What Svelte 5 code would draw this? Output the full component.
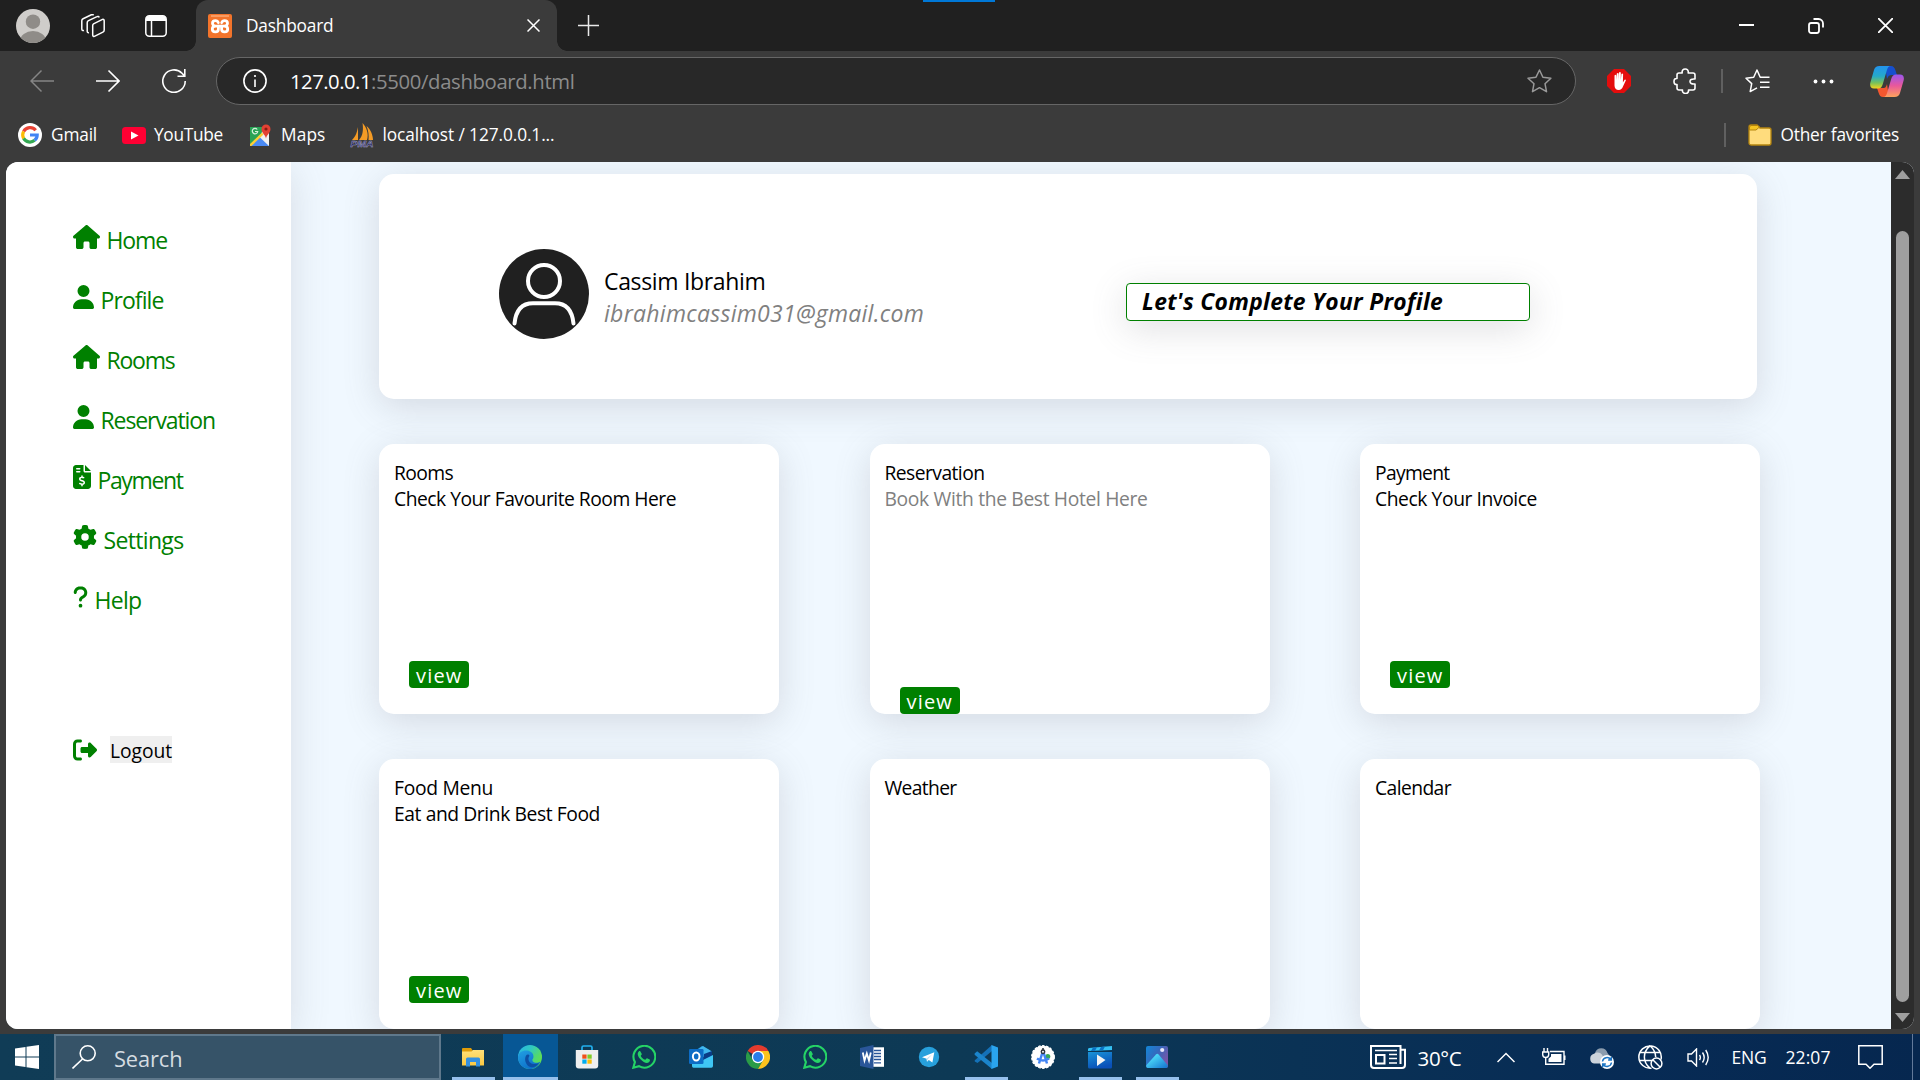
<script>
  const nav = [
    { icon: 'house', label: 'Home', w: 60.5 },
    { icon: 'user', label: 'Profile', w: 63 },
    { icon: 'house', label: 'Rooms', w: 68 },
    { icon: 'user', label: 'Reservation', w: 114.5 },
    { icon: 'invoice', label: 'Payment', w: 85 },
    { icon: 'gear', label: 'Settings', w: 80 },
    { icon: 'question', label: 'Help', w: 47 },
  ];

  const faIcons = {
    house: { w: 576, d: 'M575.8 255.5c0 18-15 32.1-32 32.1h-32l.7 160.2c0 2.700-.2 5.400-.5 8.100V472c0 22.100-17.900 40-40 40H456c-1.100 0-2.200 0-3.300-.1c-1.400 .1-2.800 .1-4.200 .1H416 392c-22.100 0-40-17.900-40-40V448 384c0-17.700-14.300-32-32-32H256c-17.700 0-32 14.300-32 32v64 24c0 22.100-17.900 40-40 40H160 128.100c-1.500 0-3-.1-4.500-.2c-1.200 .1-2.400 .2-3.600 .2H104c-22.100 0-40-17.900-40-40V360c0-.9 0-1.900 .1-2.800V287.600H32c-18 0-32-14-32-32.100c0-9 3-17 10-24L266.400 8c7-7 15-8 22-8s15 2 21 7L564.800 231.500c8 7 12 15 11 24z' },
    user: { w: 448, d: 'M224 256A128 128 0 1 0 224 0a128 128 0 1 0 0 256zm-45.700 48C79.800 304 0 383.800 0 482.300C0 498.700 13.300 512 29.700 512H418.300c16.400 0 29.700-13.300 29.700-29.700C448 383.800 368.200 304 269.700 304H178.300z' },
    invoice: { w: 384, d: 'M64 0C28.700 0 0 28.700 0 64V448c0 35.300 28.700 64 64 64H320c35.300 0 64-28.700 64-64V160H256c-17.700 0-32-14.300-32-32V0H64zM256 0V128H384L256 0zM64 80c0-8.800 7.200-16 16-16h64c8.800 0 16 7.200 16 16s-7.200 16-16 16H80c-8.800 0-16-7.200-16-16zm0 64c0-8.800 7.200-16 16-16h64c8.800 0 16 7.200 16 16s-7.200 16-16 16H80c-8.800 0-16-7.200-16-16zm128 72c8.800 0 16 7.200 16 16v17.300c8.500 1.200 16.700 3.100 24.100 5.100c8.500 2.300 13.600 11 11.300 19.600s-11 13.600-19.600 11.300c-11.100-3-22-5.200-32.100-5.300c-8.400-.1-17.400 1.800-23.600 5.500c-5.700 3.400-8.100 7.300-8.100 12.800c0 3.700 1.300 6.500 7.300 10.100c6.900 4.100 16.600 7.100 29.200 10.900l.5 .1c11.300 3.400 25.300 7.600 36.300 14.600c12.100 7.600 22.400 19.700 22.700 38.200c.3 19.300-9.600 33.300-22.900 41.600c-7.700 4.800-16.400 7.600-25.100 9.100V440c0 8.800-7.200 16-16 16s-16-7.200-16-16V422.200c-11.200-2.100-21.700-5.700-30.900-8.900c-2.100-.7-4.200-1.400-6.200-2.100c-8.400-2.800-12.900-11.900-10.100-20.200s11.900-12.900 20.200-10.100c2.500 .8 4.800 1.600 7.100 2.400c13.600 4.600 24.600 8.400 36.300 8.700c9.100 .3 17.900-1.700 23.700-5.300c5.100-3.200 7.900-7.300 7.800-14c-.1-4.600-1.800-7.800-7.700-11.600c-6.800-4.300-16.500-7.400-29-11.200l-1.600-.5c-11-3.300-24.300-7.300-34.800-13.700c-12-7.200-22.600-18.900-22.700-37.300c-.1-19.400 10.800-32.800 23.800-40.500c7.500-4.400 15.800-7.200 24.100-8.700V232c0-8.800 7.200-16 16-16z' },
    gear: { w: 512, d: 'M495.900 166.600c3.200 8.700 .5 18.400-6.400 24.600l-43.300 39.400c1.100 8.300 1.700 16.800 1.700 25.400s-.6 17.100-1.700 25.400l43.300 39.400c6.900 6.200 9.600 15.900 6.400 24.600c-4.400 11.900-9.700 23.300-15.800 34.300l-4.700 8.100c-6.600 11-14 21.400-22.100 31.200c-5.900 7.200-15.700 9.600-24.500 6.800l-55.700-17.700c-13.400 10.300-28.200 18.900-44 25.400l-12.500 57.100c-2 9.100-9 16.300-18.200 17.800c-13.800 2.300-28 3.500-42.500 3.500s-28.700-1.200-42.500-3.500c-9.200-1.500-16.200-8.700-18.200-17.800l-12.500-57.100c-15.800-6.500-30.600-15.100-44-25.400L83.100 425.900c-8.800 2.800-18.600 .3-24.500-6.800c-8.100-9.800-15.500-20.200-22.100-31.200l-4.700-8.100c-6.100-11-11.400-22.400-15.800-34.300c-3.200-8.700-.5-18.400 6.400-24.600l43.300-39.400C64.600 273.100 64 264.600 64 256s.6-17.100 1.700-25.400L22.400 191.200c-6.900-6.200-9.600-15.900-6.400-24.600c4.400-11.900 9.700-23.300 15.800-34.300l4.700-8.100c6.600-11 14-21.400 22.100-31.200c5.900-7.200 15.700-9.600 24.500-6.800l55.700 17.700c13.400-10.300 28.200-18.900 44-25.400l12.500-57.100c2-9.100 9-16.300 18.200-17.800C227.300 1.200 241.500 0 256 0s28.700 1.200 42.500 3.500c9.200 1.500 16.200 8.700 18.200 17.800l12.500 57.100c15.800 6.500 30.600 15.100 44 25.400l55.700-17.700c8.800-2.800 18.600-.3 24.500 6.800c8.100 9.800 15.500 20.200 22.100 31.200l4.700 8.100c6.100 11 11.400 22.400 15.800 34.300zM256 336a80 80 0 1 0 0-160 80 80 0 1 0 0 160z' },
    question: { w: 320, d: 'M80 160c0-35.300 28.700-64 64-64h32c35.300 0 64 28.700 64 64v3.600c0 21.800-11.100 42.100-29.400 53.800l-42.200 27.100c-25.200 16.200-40.400 44.100-40.400 74V320c0 17.700 14.300 32 32 32s32-14.300 32-32v-1.400c0-8.200 4.200-15.800 11-20.200l42.200-27.100c36.600-23.600 58.800-64.100 58.800-107.700V160c0-70.700-57.300-128-128-128H144C73.300 32 16 89.300 16 160c0 17.700 14.300 32 32 32s32-14.300 32-32zm80 320a40 40 0 1 0 0-80 40 40 0 1 0 0 80z' },
    logout: { w: 512, d: 'M377.900 105.900L500.700 228.700c7.200 7.200 11.300 17.100 11.300 27.300s-4.100 20.100-11.300 27.300L377.900 406.100c-6.400 6.400-15 9.900-24 9.900c-18.700 0-33.900-15.200-33.900-33.900V320H192c-17.700 0-32-14.300-32-32V224c0-17.700 14.300-32 32-32H320V129.900c0-18.700 15.200-33.900 33.900-33.900c9 0 17.600 3.600 24 9.900zM160 96H96c-17.700 0-32 14.300-32 32V384c0 17.700 14.300 32 32 32h64c17.700 0 32 14.300 32 32s-14.300 32-32 32H96c-53 0-96-43-96-96V128C0 75 43 32 96 32h64c17.700 0 32 14.300 32 32s-14.300 32-32 32z' },
  };

  const cards = [
    { title: 'Rooms', tw: 59, desc: 'Check Your Favourite Room Here', dw: 282, view: true },
    { title: 'Reservation', tw: 100, desc: 'Book With the Best Hotel Here', dw: 263, muted: true, view: true, low: true },
    { title: 'Payment', tw: 74.5, desc: 'Check Your Invoice', dw: 162, view: true },
    { title: 'Food Menu', tw: 99, desc: 'Eat and Drink Best Food', dw: 206, view: true },
    { title: 'Weather', tw: 72 },
    { title: 'Calendar', tw: 76 },
  ];

  const apps = [
    { id: 'explorer', open: true },
    { id: 'edge', active: true },
    { id: 'store' },
    { id: 'whatsapp' },
    { id: 'outlook' },
    { id: 'chrome' },
    { id: 'whatsapp' },
    { id: 'word' },
    { id: 'telegram' },
    { id: 'vscode', open: true },
    { id: 'studio' },
    { id: 'movies', open: true },
    { id: 'photos', open: true },
  ];

  // Spreads a label's letters so that it fills the given advance width.
  function fit(node, width) {
    const natural = node.getBoundingClientRect().width;
    node.style.letterSpacing = `${(width - natural) / node.textContent.length}px`;
  }
</script>

{#snippet fa(name)}
  <svg class="fa" viewBox="0 0 {faIcons[name].w} 512" style:width="{(faIcons[name].w / 512) * 24}px">
    <path fill-rule={name === 'house' ? 'nonzero' : 'evenodd'} d={faIcons[name].d} />
  </svg>
{/snippet}

{#snippet appIcon(id)}
  <svg width="24" height="24" viewBox="0 0 24 24">
    {#if id === 'explorer'}
      <path d="M1 4a1 1 0 0 1 1-1h8l2 3v3H1z" fill="#e09c08" />
      <path d="M1 6.500h9.500L12 5h11v15.500H1z" fill="url(#gFolder)" />
      <path d="M5 21.500V14a1.500 1.500 0 0 1 1.500-1.500h11A1.500 1.500 0 0 1 19 14v7.500h-4v-4.500H9v4.500z" fill="#3390e0" />
    {:else if id === 'edge'}
      <circle cx="12" cy="12" r="12" fill="url(#gEdgeA)" />
      <path d="M0 12C.5 7 5 5 9 5.500c5 .6 7 4 6.500 7-.3 1.500-1.500 2-1 3.500.8 2 5 2.500 8 .5C20 22 16 24 12 24 5 24 0 19 0 12z" fill="url(#gEdgeB)" />
      <path d="M8.500 10C6 13 7 19 11 21.500c3 1.700 7.500.5 10-3.500-5 2.500-10 .5-10.500-3.500-.2-2 .5-3 1-3.800C11 9.500 9.500 9 8.500 10z" fill="#0d4fa3" />
      <path d="M24 11.500c0 3-2 5-5 5-2.500 0-4.200-.6-4.600-1.600-.3-.8.9-1.400 1.100-3C15.900 8.500 13 6 9 5.500z" fill="#56dc62" opacity=".35" />
    {:else if id === 'store'}
      <path d="M7 6V2.500A1.500 1.500 0 0 1 8.500 1h7A1.500 1.500 0 0 1 17 2.500V6" fill="none" stroke="#22b0ee" stroke-width="1.700" />
      <path d="M.8 5h22.400v15.500a3 3 0 0 1-3 3H3.800a3 3 0 0 1-3-3z" fill="#efefef" />
      <path d="M7.300 9.500h4.300v4.200H7.300z" fill="#f1511b" /><path d="M12.400 9.500h4.300v4.200h-4.300z" fill="#80cc28" />
      <path d="M7.300 14.500h4.300v4.200H7.300z" fill="#00adef" /><path d="M12.400 14.500h4.300v4.200h-4.300z" fill="#fbbc09" />
    {:else if id === 'whatsapp'}
      <path d="M1.300 22.700l1.600-5.600A10.900 10.900 0 1 1 7 21.200z" fill="none" stroke="#25d366" stroke-width="2.100" />
      <path d="M8.300 6.300c-.5-.5-1-.4-1.500.1-2 2-1 4.900 1.700 7.900 3 3.200 6.200 4.500 8.400 3 1-.8 1.400-2.300.8-2.700l-2.600-1.300c-.8-.3-1.200 1.700-2 1.500-1.800-.6-3.600-2.300-4.300-3.900-.2-.8 1.300-1.100 1-2z" fill="#25d366" />
    {:else if id === 'outlook'}
      <path d="M3 8l10-7 10 6v5H3z" fill="#1f8fdc" /><path d="M8 5l6-4 9 5.500L15 12z" fill="#40b8ee" />
      <path d="M15 9l8-3v6l-9 6z" fill="#0a3c86" />
      <path d="M3 13l9 3 12-6v11a1.700 1.700 0 0 1-1.700 1.700H4.500A1.700 1.700 0 0 1 3 21z" fill="#3fc6f4" />
      <rect x="0" y="4" width="14.500" height="15" rx="1.300" fill="#0d6cc5" />
      <ellipse cx="7.200" cy="11.500" rx="3.300" ry="4" fill="none" stroke="#fff" stroke-width="2" />
    {:else if id === 'chrome'}
      <path d="M12 12L1.600 6A12 12 0 0 1 22.400 6H12z" fill="#e33b2e" />
      <path d="M1.600 6A12 12 0 0 0 12 24l5.200-9L12 12 6.800 15z" fill="#2a9b47" />
      <path d="M12 6h10.400A12 12 0 0 1 12 24l5.200-9z" fill="#fcc31e" />
      <circle cx="12" cy="12" r="6.200" fill="#fff" /><circle cx="12" cy="12" r="4.900" fill="#2a7de9" />
    {:else if id === 'word'}
      <rect x="11" y="2.300" width="13" height="19.500" fill="#fff" />
      <path d="M14 5.500h7M14 8.500h7M14 11.500h7M14 14.500h7M14 17.800h7" stroke="#2a5699" stroke-width="1.300" />
      <path d="M0 3l13.500-3v24L0 21z" fill="#2a5699" />
      <path d="M2.800 7.500l1.700 8L6.800 8.500 9 15.500l1.800-8" fill="none" stroke="#fff" stroke-width="1.800" />
    {:else if id === 'telegram'}
      <circle cx="12" cy="12" r="10.200" fill="#27a0dc" />
      <path d="M5 12.300L17.300 7.300 15.400 17.500l-3.600-2.600-1.800 1.800-.4-3z" fill="#fff" />
      <path d="M9.600 13.500l5.500-4-4.300 4.700-.8 2.500z" fill="#bddff2" />
    {:else if id === 'vscode'}
      <path d="M18 0v6L3.500 18 .8 16.500 .6 15.500z" fill="#1471b8" />
      <path d="M.6 8.500L3.200 6.300 18 18v6L.6 9.700z" fill="#1b84cb" />
      <path d="M17.500 0L24 2.500v19L17.500 24z" fill="#2aa4ee" />
    {:else if id === 'studio'}
      <circle cx="12" cy="12" r="11.300" fill="#fff" stroke="#fff" stroke-width="1.300" stroke-dasharray="2.500 1.500" />
      <circle cx="16.800" cy="11.500" r="2.500" fill="#35a957" />
      <path d="M11.300 8L8 18.500M12.700 8L16 18.500M6 13.500c3.500 2.500 8.500 2.500 12 0" fill="none" stroke="#4285f4" stroke-width="2.500" />
      <circle cx="12" cy="6.800" r="1.700" fill="#fff" stroke="#30373f" stroke-width="1.500" /><path d="M12 3v2.500" stroke="#30373f" stroke-width="1.600" />
    {:else if id === 'movies'}
      <path d="M0 7h24v15a1.500 1.500 0 0 1-1.500 1.500h-21A1.500 1.500 0 0 1 0 22z" fill="url(#gMovie)" />
      <path d="M0 7V4.500A1.500 1.500 0 0 1 1 3L24 1v4L0 6z" fill="#35c0f3" />
      <path d="M5 2.600l4-.3L7 5.700 3 6zM13 2l4-.4L15 5.200 11 5.500z" fill="#0b72c4" />
      <path d="M9 9.500l8.500 5.500L9 21z" fill="#f4f4f4" />
    {:else if id === 'photos'}
      <rect x="1" y="1" width="22" height="22" rx="2" fill="url(#gPhoto)" />
      <path d="M1.500 20L11 9.500a1.800 1.800 0 0 1 2.600 0L22.500 20a2 2 0 0 1-1.500 3H3a2 2 0 0 1-1.500-3z" fill="url(#gHill)" />
      <circle cx="17.200" cy="5" r="2.100" fill="#e8e9fb" />
    {/if}
  </svg>
{/snippet}

<svg class="defs" width="0" height="0">
  <defs>
    <linearGradient id="gFolder" x2="0" y2="1"><stop stop-color="#ffe07a" /><stop offset="1" stop-color="#fbc941" /></linearGradient>
    <linearGradient id="gEdgeA" x2="1" y2=".5"><stop stop-color="#28b3e8" /><stop offset=".5" stop-color="#30c8c0" /><stop offset="1" stop-color="#62e04e" /></linearGradient>
    <linearGradient id="gEdgeB" x2=".6" y2="1"><stop stop-color="#22a0e2" /><stop offset="1" stop-color="#0c6fc9" /></linearGradient>
    <linearGradient id="gMovie" x2=".4" y2="1"><stop stop-color="#1a94d8" /><stop offset="1" stop-color="#0a50b8" /></linearGradient>
    <linearGradient id="gPhoto" x2="1" y2=".6"><stop stop-color="#1287d8" /><stop offset=".5" stop-color="#3469bd" /><stop offset="1" stop-color="#7a55a8" /></linearGradient>
    <linearGradient id="gHill" x2="1" y2="1"><stop offset=".2" stop-color="#4fe0fb" /><stop offset="1" stop-color="#1471cf" /></linearGradient>
    <linearGradient id="gCopA" x2="0" y2="1"><stop stop-color="#2394ee" /><stop offset=".45" stop-color="#25a9c9" /><stop offset=".75" stop-color="#78c15a" /><stop offset="1" stop-color="#f4d31c" /></linearGradient>
    <linearGradient id="gCopB" x2="0" y2="1"><stop stop-color="#9a56ee" /><stop offset=".5" stop-color="#e9589b" /><stop offset="1" stop-color="#fda35c" /></linearGradient>
  </defs>
</svg>

<div class="screen">
  <header class="tabs">
    <svg class="avatar" width="34" height="34" viewBox="0 0 34 34">
      <clipPath id="av"><circle cx="17" cy="17" r="17" /></clipPath>
      <g clip-path="url(#av)"><path d="M0 0h34v34H0z" fill="#cfcdca" /><circle cx="17" cy="12.700" r="7.200" fill="#8f8c88" /><ellipse cx="17" cy="32" rx="13" ry="10" fill="#8f8c88" /></g>
    </svg>
    <svg class="workspaces" width="24" height="24" viewBox="0 0 24 24" fill="none" stroke="#fff" stroke-width="1.500" stroke-linejoin="round">
      <path d="M12.500 9.800l8.500-4.200c1.200-.6 2.200 0 2.200 1.200v9.200c0 1-.5 1.800-1.300 2.200l-8 4c-1.200.6-2.200 0-2.200-1.200V11.500c0-.8.300-1.400.8-1.700z" />
      <path d="M8 18.700c-1 .2-1.800-.4-1.800-1.500V8.700c0-1 .5-1.700 1.300-2.100l8.500-4c1-.5 1.900-.1 2.200.8" /><path d="M3 16.500c-1.200.4-2.200-.3-2.200-1.500V6.800c0-1 .4-1.700 1.300-2.100l8.300-3.900c1-.4 1.700-.2 2.100.5" />
    </svg>
    <svg class="tabmenu" width="22" height="22" viewBox="0 0 22 22"><rect x=".8" y=".8" width="20.400" height="20.400" rx="3.500" fill="none" stroke="#fff" stroke-width="1.500" /><path d="M1 6V4a3 3 0 0 1 3-3h14a3 3 0 0 1 3 3v2z" fill="#fff" /><path d="M6.500 6v15" stroke="#fff" stroke-width="1.500" /></svg>
    <div class="tab">
      <svg width="24" height="24" viewBox="0 0 24 24"><rect width="24" height="24" rx="2" fill="#f3742b" /><path d="M3 2h18" stroke="#ffc39b" /><g fill="none" stroke="#fff" stroke-width="2.800" stroke-linecap="round" stroke-linejoin="round"><path d="M10.300 8.600C9.800 7.200 8.800 6.600 7.500 6.600 5.700 6.600 4.500 7.800 4.500 9.300S5.700 12.100 7.300 12.100C5.600 12.100 4.300 13.300 4.300 15s1.300 2.900 3.100 2.900 3-1.300 3-2.900v-2.900" /><path d="M13.700 8.600c.5-1.400 1.500-2 2.800-2 1.800 0 3 1.200 3 2.700s-1.200 2.800-2.800 2.800c1.700 0 3 1.200 3 2.900s-1.300 2.900-3.100 2.900-3-1.300-3-2.900v-2.900" /><path d="M8 12.100h8" /></g></svg>
      <span class="grow"><span class="t" use:fit={87.5}>Dashboard</span></span>
      <svg width="13" height="13" viewBox="0 0 13 13" stroke="#fff" stroke-width="1.500"><path d="M.5.5l12 12M12.500.5l-12 12" /></svg>
    </div>
    <svg class="plus" width="21" height="21" viewBox="0 0 21 21" stroke="#e9e9e9" stroke-width="1.500"><path d="M10.500 0v21M0 10.500h21" /></svg>
    <div class="winctl">
      <svg width="15" height="15" viewBox="0 0 15 15"><path d="M0 7h15" stroke="#fff" stroke-width="2" /></svg>
      <svg width="16" height="16" viewBox="0 0 16 16" fill="none" stroke="#fff" stroke-width="1.800"><rect x="1" y="5" width="10" height="10" rx="2.200" /><path d="M5.500 1h5a4.500 4.500 0 0 1 4.500 4.500v4" /></svg>
      <svg width="15" height="15" viewBox="0 0 15 15" stroke="#fff" stroke-width="1.800"><path d="M0 0l15 15M15 0L0 15" /></svg>
    </div>
    <i class="drag"></i>
  </header>

  <div class="toolbar">
    <svg width="24" height="24" viewBox="0 0 24 24" fill="none" stroke="#858585" stroke-width="1.500"><path d="M24 12H1M11.500 1.500L1 12l10.500 10.500" /></svg>
    <svg width="24" height="24" viewBox="0 0 24 24" fill="none" stroke="#fff" stroke-width="1.600"><path d="M0 12h23M12.500 1.500L23 12 12.500 22.500" /></svg>
    <svg width="24" height="24" viewBox="0 0 24 24" fill="none" stroke="#fff" stroke-width="1.600"><path d="M23.200 12A11.200 11.200 0 1 1 20 4.300l2.500 2.600M22.800 0v7.200h-7.300" /></svg>
    <div class="address">
      <svg width="24" height="24" viewBox="0 0 24 24"><circle cx="12" cy="12" r="11.100" fill="none" stroke="#fff" stroke-width="1.600" /><circle cx="12" cy="7" r="1.100" fill="#fff" /><path d="M12 10.500V18" stroke="#fff" stroke-width="1.600" /></svg>
      <div class="url"><span class="t host" use:fit={81}>127.0.0.1</span><span class="t" use:fit={203.500}>:5500/dashboard.html</span></div>
      <svg width="25" height="24" viewBox="0 0 25 24" fill="none" stroke="#999" stroke-width="1.500" stroke-linejoin="round"><path d="M12.500 1l3.400 7.200 8 1-5.900 5.500 1.500 8-7-4-7 4 1.500-8L1 9.200l8-1z" /></svg>
    </div>
    <div class="tools">
      <svg width="24" height="24" viewBox="0 0 24 24"><path d="M7 0h10l7 7v10l-7 7H7l-7-7V7z" fill="#e40d0d" /><path d="M7.500 13V6.500q1-1.300 1.800 0V11l.5-6.500q1-1.200 1.800 0V11L12 3.500q1-1.200 1.800 0V11l.6-6q1-1.100 1.700.1l-.2 8.400 1.700-2.700q1-.5 1.300.4l-2.800 6c-1 2.500-2.300 3.800-4.300 3.800-2.800 0-4.300-2-4.300-4.500z" fill="#fff" /></svg>
      <svg class="puzzle" width="24" height="26" viewBox="0 0 24 26" fill="none" stroke="#fff" stroke-width="1.600" stroke-linejoin="round"><path d="M6 5h3.200c-.5-2.700 1-4 3-4s3.500 1.300 3 4H20q2 0 2 2v4c-3.500-.3-5 .7-5 2.500s1.500 2.800 5 2.500v4q0 2-2 2h-4.500c.3 2.500-1.200 3.500-3 3.500S9 24 9.500 22H6q-2 0-2-2v-3.500C1.800 16.800 1 15.500 1 13.500s.8-3.300 3-3V7q0-2 2-2z" /></svg>
      <i class="vr"></i>
      <svg class="favs" width="25" height="24" viewBox="0 0 25 24" fill="none" stroke="#fff" stroke-width="1.500" stroke-linejoin="round"><path d="M16 8.200h-.8L12 1 8.700 8.200l-7.700 1 5.700 5.400-1.500 8 6.800-3.800M16 8.200h8.500M15 13.300h9.500M15 18.300h9.500" /></svg>
      <svg class="more" width="21" height="5" viewBox="0 0 21 5" fill="#fff"><circle cx="2.500" cy="2.500" r="1.900" /><circle cx="10.500" cy="2.500" r="1.900" /><circle cx="18.500" cy="2.500" r="1.900" /></svg>
      <svg class="copilot" width="34" height="31" viewBox="0 0 34 31"><path d="M15 0h6c2.500 0 3.500 1.500 4.500 4.500L27 9h-5c-3 0-4 1.500-5 4z" fill="#164fce" /><path d="M19 31h-6c-2.500 0-3.500-1.500-4.500-4.500L7 22h6c3 0 3-1.500 4-4z" fill="#f3572f" /><path d="M9.500 0H21c-2.500 0-3.500 2-4.200 4.500l-4 13.500c-1 3-2 4.500-4.800 4.500H4c-3.200 0-4.500-2.500-3.600-6L4 4C4.800 1.500 6.500 0 9.500 0z" fill="url(#gCopA)" /><path d="M24.500 31H13c2.500 0 3.500-2 4.200-4.500l4-13.500c1-3 2-4.500 4.800-4.500h4c3.200 0 4.500 2.500 3.600 6L30 27c-.8 2.500-2.500 4-5.500 4z" fill="url(#gCopB)" /></svg>
    </div>
  </div>

  <div class="bookmarks">
    <a class="bm"><svg width="24" height="24" viewBox="0 0 24 24"><circle cx="12" cy="12" r="12" fill="#fff" /><g fill="none" stroke-width="3.200"><path d="M17.700 7.300A7.300 7.300 0 0 0 5.600 8.600" stroke="#ea4335" /><path d="M5.600 8.600a7.300 7.300 0 0 0 0 6.800" stroke="#fbbc05" /><path d="M5.600 15.400a7.300 7.300 0 0 0 11 1.900" stroke="#34a853" /><path d="M16.600 17.300A7 7 0 0 0 19.200 12H12" stroke="#4285f4" /></g></svg><span class="t" use:fit={46}>Gmail</span></a>
    <a class="bm yt"><svg width="24" height="17" viewBox="0 0 24 17"><rect width="24" height="17" rx="3.500" fill="#ff0033" /><path d="M9 4.500l7.500 4L9 12.500z" fill="#fff" /></svg><span class="t" use:fit={69}>YouTube</span></a>
    <a class="bm mp"><svg width="22" height="23" viewBox="0 0 22 23"><path d="M1 3h19v19H1z" fill="#f1f1f1" /><path d="M1 3h13l-2 9L1 22z" fill="#2aa356" /><path d="M1 22l9.500-9L20 22z" fill="#4a8af4" /><path d="M1 20L13 8.500l1.500 2L2.500 22H1z" fill="#fccf34" /><path d="M8.200 5.500a2.700 2.700 0 1 0 .5 2H6" fill="none" stroke="#d4f0dc" stroke-width="1.200" /><path d="M17 14.500c-.5-3.500-4.500-5.500-4.500-9.500a4.500 4.500 0 0 1 9 0c0 4-4 6-4.500 9.500z" fill="#e34133" /><circle cx="17" cy="5" r="1.600" fill="#8a1b12" /></svg><span class="t" use:fit={44.500}>Maps</span></a>
    <a class="bm pma"><svg class="sail" width="24" height="24" viewBox="0 0 24 24"><path d="M8 4v13H2C6 13 7 9 8 4zM12.500 0C16.500 4 19 11 17 17H9c4-4 4.500-11 3.500-17zM16.500 3c4 3 6.500 9 6.500 14h-4.500c.5-4.500 0-9.500-2-14z" fill="#f49b25" /><text x="0.500" y="23.500" class="pmatext" textLength="23" lengthAdjust="spacingAndGlyphs">PMA</text></svg><span class="t" use:fit={172}>localhost / 127.0.0.1...</span></a>
    <div class="other"><i class="vr"></i><svg width="24" height="22" viewBox="0 0 24 22"><path d="M1 3a2 2 0 0 1 2-2h6l3 3h9a2 2 0 0 1 2 2v13a2 2 0 0 1-2 2H3a2 2 0 0 1-2-2z" fill="#ffdc7d" stroke="#b5850f" stroke-width="1.300" /><path d="M1.500 6H8l3.500-3-2-1.500H3L1.500 3z" fill="#f5c421" stroke="#b5850f" /></svg><span class="t" use:fit={118.5}>Other favorites</span></div>
  </div>

  <div class="view">
    <aside>
      <nav>
        {#each nav as item}
          <a class="item">{@render fa(item.icon)}<span class="t" use:fit={item.w}>{item.label}</span></a>
        {/each}
      </nav>
      <div class="logout">{@render fa('logout')}<button><span class="t" use:fit={62}>Logout</span></button></div>
    </aside>
    <main>
      <section class="banner">
        <svg width="90" height="90" viewBox="0 0 90 90"><circle cx="45" cy="45" r="45" fill="#202020" /><g fill="none" stroke="#fff" stroke-width="4" stroke-linecap="round"><circle cx="45" cy="32" r="16" /><path d="M15.500 74.500C17 60 24 54.300 34 54.300h22c10 0 17 5.700 18.500 20.200" /></g></svg>
        <div class="who">
          <div><span class="t" use:fit={161.5}>Cassim Ibrahim</span></div>
          <div class="mail"><span class="t" use:fit={320}>ibrahimcassim031@gmail.com</span></div>
        </div>
        <div class="complete"><span class="t" use:fit={301}>Let's Complete Your Profile</span></div>
      </section>
      <section class="cards">
        {#each cards as c}
          <article class:low={c.low}>
            <div><span class="t" use:fit={c.tw}>{c.title}</span></div>
            {#if c.desc}<div class:muted={c.muted}><span class="t" use:fit={c.dw}>{c.desc}</span></div>{/if}
            {#if c.view}<button class="viewbtn"><span class="t" use:fit={46.500}>view</span></button>{/if}
          </article>
        {/each}
      </section>
    </main>
    <div class="scroll">
      <svg width="15" height="9" viewBox="0 0 15 9"><path d="M7.500 0L15 9H0z" fill="#9f9f9f" /></svg>
      <i class="thumb"></i>
      <svg width="15" height="9" viewBox="0 0 15 9"><path d="M7.500 9L15 0H0z" fill="#9f9f9f" /></svg>
    </div>
  </div>

  <footer>
    <div class="start"><svg width="24" height="24" viewBox="0 0 24 24" fill="#fff"><path d="M0 3.500l10.500-1.600v9.600H0zM11.500 1.700L24 0v11.500H11.500zM0 12.500h10.500v9.600L0 20.500zM11.500 12.500H24V24l-12.500-1.700z" /></svg></div>
    <div class="search"><svg width="24" height="24" viewBox="0 0 24 24" fill="none" stroke="#fff" stroke-width="1.600"><circle cx="15.700" cy="8.300" r="7.500" /><path d="M10.500 14L.5 23.500" /></svg><span class="t" use:fit={68.5}>Search</span></div>
    <div class="apps">
      {#each apps as a}
        <div class="app" class:active={a.active} class:open={a.open}>{@render appIcon(a.id)}</div>
      {/each}
    </div>
    <div class="tray">
      <svg class="news" width="36" height="24" viewBox="0 0 36 24" fill="none" stroke="#fff"><path d="M31 4.800h4V20a3 3 0 0 1-3 3H4a3 3 0 0 1-3-3V1h29.500v18" stroke-width="2" /><path d="M5 5.500h22M19 9.500h8M19 13.500h8M19 18h8" stroke-width="1.700" /><rect x="6" y="10" width="8.500" height="8.500" stroke-width="2" /></svg>
      <span class="t temp" use:fit={44}>30°C</span>
      <svg class="caret" width="18" height="11" viewBox="0 0 18 11" fill="none" stroke="#fff" stroke-width="1.500"><path d="M.5 10L9 1.500l8.500 8.500" /></svg>
      <svg class="batt" width="24" height="18" viewBox="0 0 24 18" fill="none" stroke="#fff" stroke-width="1.400"><path d="M8 3.500h14v12.800H5.500M22.800 7.500v4.500M2 0v4M5.500 0v4M.7 4h6v2.500a3 3 0 0 1-6 0zM3.700 9.500v6.800h3" /><path d="M9 6h10.500v8H6.500v-3.200L9 8.500z" fill="#fff" stroke="none" /></svg>
      <svg class="cloud" width="25" height="24" viewBox="0 0 25 24"><path d="M6 8a6.500 6.500 0 0 1 12.500 0 5 5 0 0 1 .5 7H8z" fill="#8b9cae" /><path d="M5 18.500a5 5 0 0 1 0-9.700c3-2.500 7-1.500 8.500 1.700L15 18.500z" fill="#ccd3db" /><circle cx="18" cy="17" r="7" fill="#fff" /><path d="M13.500 16.500a4.600 4.600 0 0 1 8.300-2M22.500 17.500a4.600 4.600 0 0 1-8.300 2M22.300 11.800v3.200h-3.200M13.700 22.200V19h3.200" fill="none" stroke="#1c75c4" stroke-width="1.500" /></svg>
      <svg class="globe" width="25" height="25" viewBox="0 0 25 25" fill="none" stroke="#fff" stroke-width="1.500"><path d="M23 14.500a11.200 11.200 0 1 0-9.500 8.700M12 .8C4.500 7 4.500 17 12 23.200M12 .8c4 3.500 5.600 7.500 5.700 11.500M2 7.500h20M1 15.500h13" /><circle cx="18.500" cy="18.500" r="5.400" /><path d="M14.800 14.800l7.500 7.500" /></svg>
      <svg class="spk" width="23" height="19" viewBox="0 0 23 19" fill="none" stroke="#fff" stroke-width="1.400"><path d="M1 6h3.500L9.500 1v17l-5-5H1z" /><path d="M12.500 7q1.700 2.500 0 5M15.500 4.500q3.400 5 0 10M18.700 2q5 7.500 0 15" /></svg>
      <span class="t eng" use:fit={35}>ENG</span>
      <span class="t time" use:fit={45}>22:07</span>
      <svg class="note" width="25" height="24" viewBox="0 0 25 24" fill="none" stroke="#fff" stroke-width="1.500"><path d="M.8.8h23.400v18.400H16l-4 4-4-4H.8z" /></svg>
      <i class="peek"></i>
    </div>
  </footer>
</div>

<style>
  :global(body) { background: #3b3b3b; overflow: hidden; }
  * { box-sizing: border-box; }
  svg { display: block; flex: none; }
  .defs { position: absolute; }
  .screen { width: 1920px; height: 1080px; display: flex; flex-direction: column; overflow: hidden; background: #3b3b3b; color: #fff; font-family: "Open Sans", "Noto Sans", sans-serif; font-size: 17.300px; }
  .t { display: inline-block; white-space: nowrap; }
  button { font: inherit; border: 0; padding: 0; }
  .vr { width: 1.500px; height: 24px; background: #606060; flex: none; }

  .tabs { position: relative; height: 51px; flex: none; display: flex; align-items: center; padding-left: 16px; background: #202020; }
  .workspaces { margin-left: 31px; }
  .tabmenu { margin-left: 40px; }
  .tab { position: relative; margin-left: 29px; width: 361px; height: 51px; padding: 0 17px 0 12px; display: flex; align-items: center; gap: 14px; background: #3b3b3b; border-radius: 12px 12px 0 0; }
  .tab::before, .tab::after { content: ""; position: absolute; bottom: 0; width: 10px; height: 10px; }
  .tab::before { left: -10px; background: radial-gradient(circle at 0 0, #202020 9.500px, #3b3b3b 10px); }
  .tab::after { right: -10px; background: radial-gradient(circle at 100% 0, #202020 9.500px, #3b3b3b 10px); }
  .grow { flex: 1; }
  .plus { margin-left: 21px; }
  .winctl { margin-left: auto; padding-right: 27px; display: flex; align-items: center; gap: 54px; }
  .drag { position: absolute; left: 923px; top: 0; width: 72px; height: 2px; background: #0078d7; }

  .toolbar { height: 60px; flex: none; display: flex; align-items: center; padding: 0 16px 0 30px; gap: 42px; }
  .address { width: 1360px; flex: none; height: 48px; margin-left: -12px; border: 1.500px solid #666; border-radius: 24px; background: #282828; display: flex; align-items: center; padding: 0 23px 0 26px; gap: 23px; }
  .url { flex: 1; font-size: 20.300px; color: #8c8c8c; padding-bottom: 1px; }
  .host { color: #fff; }
  .tools { flex: 1; display: flex; align-items: center; margin-left: -11px; }
  .puzzle { margin-left: 42px; }
  .tools .vr { margin-left: 24px; }
  .favs { margin-left: 22px; }
  .more { margin-left: 43px; }
  .copilot { margin-left: auto; }

  .bookmarks { height: 51px; flex: none; display: flex; align-items: center; padding: 0 21px 3px 18px; }
  .bm, .other { display: flex; align-items: center; gap: 9px; }
  .bookmarks .t { padding-bottom: 2px; }
  .yt { margin-left: 25px; gap: 8px; }
  .mp { margin-left: 26px; gap: 10px; }
  .pma { margin-left: 24px; }
  .sail { overflow: visible; }
  .pmatext { font: italic bold 8.500px "Liberation Sans", sans-serif; fill: #23235a; stroke: #a9a9d0; stroke-width: .4px; }
  .other { margin-left: auto; }
  .other .vr { margin-right: 13px; }

  .view { height: 867px; margin: 0 6px; flex: none; display: flex; border-radius: 12px; overflow: hidden; background: #f0f8ff; color: #000; }
  aside { width: 285px; flex: none; background: #fff; padding: 47px 0 0 67px; box-shadow: 0 8px 36px rgba(100, 100, 111, .19); }
  .fa { height: 24px; fill: green; }
  .item { display: flex; align-items: center; gap: 6.500px; height: 60px; font-size: 23px; color: green; }
  .item .fa { margin-bottom: 4px; }
  .item .t { padding-top: 1px; }
  .logout { display: flex; align-items: center; gap: 13px; margin-top: 107px; }
  .logout button { background: #efefef; height: 27px; line-height: 29px; font-size: 19.300px; color: #000; }

  main { flex: 1; padding: 12px 0 0 88px; }
  .banner { width: 1378px; height: 225px; border-radius: 15px; background: #fff; box-shadow: 0 8px 36px rgba(100, 100, 111, .2); display: flex; align-items: center; padding: 15px 0 0 120px; }
  .who { width: 522px; margin-left: 15px; font-size: 23px; line-height: 32px; padding-top: 5px; }
  .mail { font-style: italic; color: #808080; }
  .complete { width: 404px; height: 38px; margin-top: 16px; border: 1.500px solid green; border-radius: 4px; padding-left: 15px; font-size: 22.800px; line-height: 36px; font-weight: 700; font-style: italic; background: #fff; box-shadow: 0 8px 36px rgba(100, 100, 111, .2); }
  .cards { display: grid; grid-template-columns: repeat(3, 400px); column-gap: 90.500px; row-gap: 45px; margin-top: 45px; }
  article { height: 270px; border-radius: 15px; background: #fff; box-shadow: 0 8px 36px rgba(100, 100, 111, .2); padding: 16px 15px 26px; display: flex; flex-direction: column; font-size: 19.300px; line-height: 26px; }
  article.low { padding-bottom: 0; }
  .muted { color: #808080; }
  .viewbtn { margin: auto 0 0 15px; width: 60px; height: 27px; padding-left: 7px; text-align: left; line-height: 30px; border-radius: 4px; background: green; color: #fff; font-size: 20px; }

  .scroll { width: 23px; background: #2c2c2c; display: flex; flex-direction: column; align-items: center; padding: 8px 0 7px; }
  .thumb { width: 13px; height: 771px; border-radius: 7px; background: #9f9f9f; margin: 52px 0 auto; }

  footer { height: 46px; margin-top: 5px; flex: none; display: flex; background: linear-gradient(90deg, #103c56, #0d3955 50%, #072b55 85%, #06274f); }
  .start { width: 54px; display: grid; place-items: center; }
  .search { width: 387px; background: #365368; border: 2px solid #5f788b; display: flex; align-items: center; gap: 18px; padding-left: 16px; font-size: 21.800px; color: #d5dce1; }
  .search .t { padding-top: 2px; }
  .apps { display: flex; gap: 2px; margin-left: 5px; }
  .app { width: 55px; display: grid; place-items: center; position: relative; padding-right: 2px; }
  .app.active { background: #075795; }
  .app.open::after, .app.active::after { content: ""; position: absolute; bottom: 0; left: 6px; right: 6px; height: 3px; background: #96c0ec; }
  .app.active::after { left: 0; right: 0; }
  .tray { margin-left: auto; display: flex; align-items: center; }
  .temp { margin-left: 12px; font-size: 20.500px; padding-top: 1px; }
  .caret { margin-left: 35px; }
  .batt { margin-left: 27px; }
  .cloud { margin-left: 23px; }
  .globe { margin-left: 24px; }
  .spk { margin-left: 24px; }
  .eng { margin-left: 22px; font-size: 17.500px; }
  .time { margin-left: 19px; font-size: 17.500px; }
  .note { margin-left: 27px; }
  .peek { width: 1.500px; height: 46px; background: #62799a; margin: 0 7px 0 29px; }
</style>
